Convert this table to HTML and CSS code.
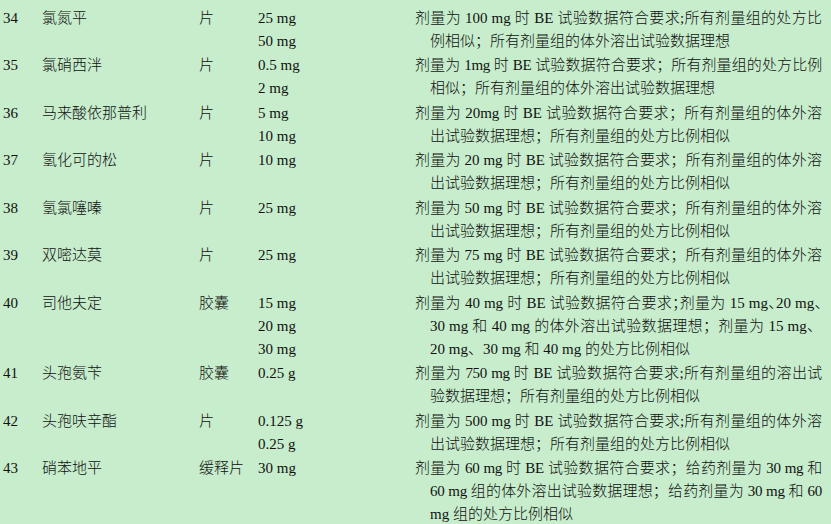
FILE: index.html
```html
<!DOCTYPE html>
<html lang="zh-CN">
<head>
<meta charset="utf-8">
<title>药品目录</title>
<link rel="stylesheet" href="styles.css">
</head>
<body>
<div class="table">
  <div class="row">
    <div class="no">34</div><div class="name">氯氮平</div><div class="form">片</div>
    <div class="dose"><span>25 mg</span><span>50 mg</span></div>
    <div class="desc"><span class="ln">剂量为 100 mg 时 BE 试验数据符合要求;所有剂量组的处方比</span><span class="ln last">例相似；所有剂量组的体外溶出试验数据理想</span></div>
  </div>
  <div class="row">
    <div class="no">35</div><div class="name">氯硝西泮</div><div class="form">片</div>
    <div class="dose"><span>0.5 mg</span><span>2 mg</span></div>
    <div class="desc"><span class="ln tight">剂量为 1mg 时 BE 试验数据符合要求；所有剂量组的处方比例</span><span class="ln last">相似；所有剂量组的体外溶出试验数据理想</span></div>
  </div>
  <div class="row">
    <div class="no">36</div><div class="name">马来酸依那普利</div><div class="form">片</div>
    <div class="dose"><span>5 mg</span><span>10 mg</span></div>
    <div class="desc"><span class="ln">剂量为 20mg 时 BE 试验数据符合要求；所有剂量组的体外溶</span><span class="ln last">出试验数据理想；所有剂量组的处方比例相似</span></div>
  </div>
  <div class="row">
    <div class="no">37</div><div class="name">氢化可的松</div><div class="form">片</div>
    <div class="dose"><span>10 mg</span></div>
    <div class="desc"><span class="ln">剂量为 20 mg 时 BE 试验数据符合要求；所有剂量组的体外溶</span><span class="ln last">出试验数据理想；所有剂量组的处方比例相似</span></div>
  </div>
  <div class="row">
    <div class="no">38</div><div class="name">氢氯噻嗪</div><div class="form">片</div>
    <div class="dose"><span>25 mg</span></div>
    <div class="desc"><span class="ln">剂量为 50 mg 时 BE 试验数据符合要求；所有剂量组的体外溶</span><span class="ln last">出试验数据理想；所有剂量组的处方比例相似</span></div>
  </div>
  <div class="row">
    <div class="no">39</div><div class="name">双嘧达莫</div><div class="form">片</div>
    <div class="dose"><span>25 mg</span></div>
    <div class="desc"><span class="ln">剂量为 75 mg 时 BE 试验数据符合要求；所有剂量组的体外溶</span><span class="ln last">出试验数据理想；所有剂量组的处方比例相似</span></div>
  </div>
  <div class="row">
    <div class="no">40</div><div class="name">司他夫定</div><div class="form">胶囊</div>
    <div class="dose"><span>15 mg</span><span>20 mg</span><span>30 mg</span></div>
    <div class="desc"><span class="ln">剂量为 40 mg 时 BE 试验数据符合要求<span class="p">；</span>剂量为 15 mg<span class="p">、</span>20 mg<span class="p">、</span></span><span class="ln">30 mg 和 40 mg 的体外溶出试验数据理想；剂量为 15 mg、</span><span class="ln last">20 mg、30 mg 和 40 mg 的处方比例相似</span></div>
  </div>
  <div class="row">
    <div class="no">41</div><div class="name">头孢氨苄</div><div class="form">胶囊</div>
    <div class="dose"><span>0.25 g</span></div>
    <div class="desc"><span class="ln tight">剂量为 750 mg 时 BE 试验数据符合要求;所有剂量组的溶出试</span><span class="ln last">验数据理想；所有剂量组的处方比例相似</span></div>
  </div>
  <div class="row">
    <div class="no">42</div><div class="name">头孢呋辛酯</div><div class="form">片</div>
    <div class="dose"><span>0.125 g</span><span>0.25 g</span></div>
    <div class="desc"><span class="ln">剂量为 500 mg 时 BE 试验数据符合要求;所有剂量组的体外溶</span><span class="ln last">出试验数据理想；所有剂量组的处方比例相似</span></div>
  </div>
  <div class="row">
    <div class="no">43</div><div class="name">硝苯地平</div><div class="form">缓释片</div>
    <div class="dose"><span>30 mg</span></div>
    <div class="desc"><span class="ln tight">剂量为 60 mg 时 BE 试验数据符合要求；给药剂量为 30 mg 和</span><span class="ln tight">60 mg 组的体外溶出试验数据理想；给药剂量为 30 mg 和 60</span><span class="ln last">mg 组的处方比例相似</span></div>
  </div>
</div>
</body>
</html>
```

FILE: styles.css
```css
html, body {
  margin: 0;
  padding: 0;
  background: #c7edcc;
}
body {
  width: 831px;
  height: 524px;
  overflow: hidden;
  font-family: "Liberation Serif", "Noto Sans CJK SC", serif;
  font-size: 15px;
  line-height: 23px;
  color: #111;
  font-weight: 300;
  text-autospace: no-autospace;
}
.table {
  display: flex;
  flex-direction: column;
  gap: 1.5px;
  padding: 6.5px 9px 0 3px;
}
.row {
  display: grid;
  grid-template-columns: 39px 157px 59px 157px 1fr;
}
.dose {
  display: flex;
  flex-direction: column;
}
.desc {
  display: flex;
  flex-direction: column;
}
.ln {
  display: block;
  text-align: justify;
  text-align-last: justify;
  padding-left: 15px;
}
.ln:first-child {
  padding-left: 0;
}
.ln.last {
  text-align-last: auto;
}
.tight {
  letter-spacing: -0.3px;
}
.p {
  font-feature-settings: "halt";
}
```
